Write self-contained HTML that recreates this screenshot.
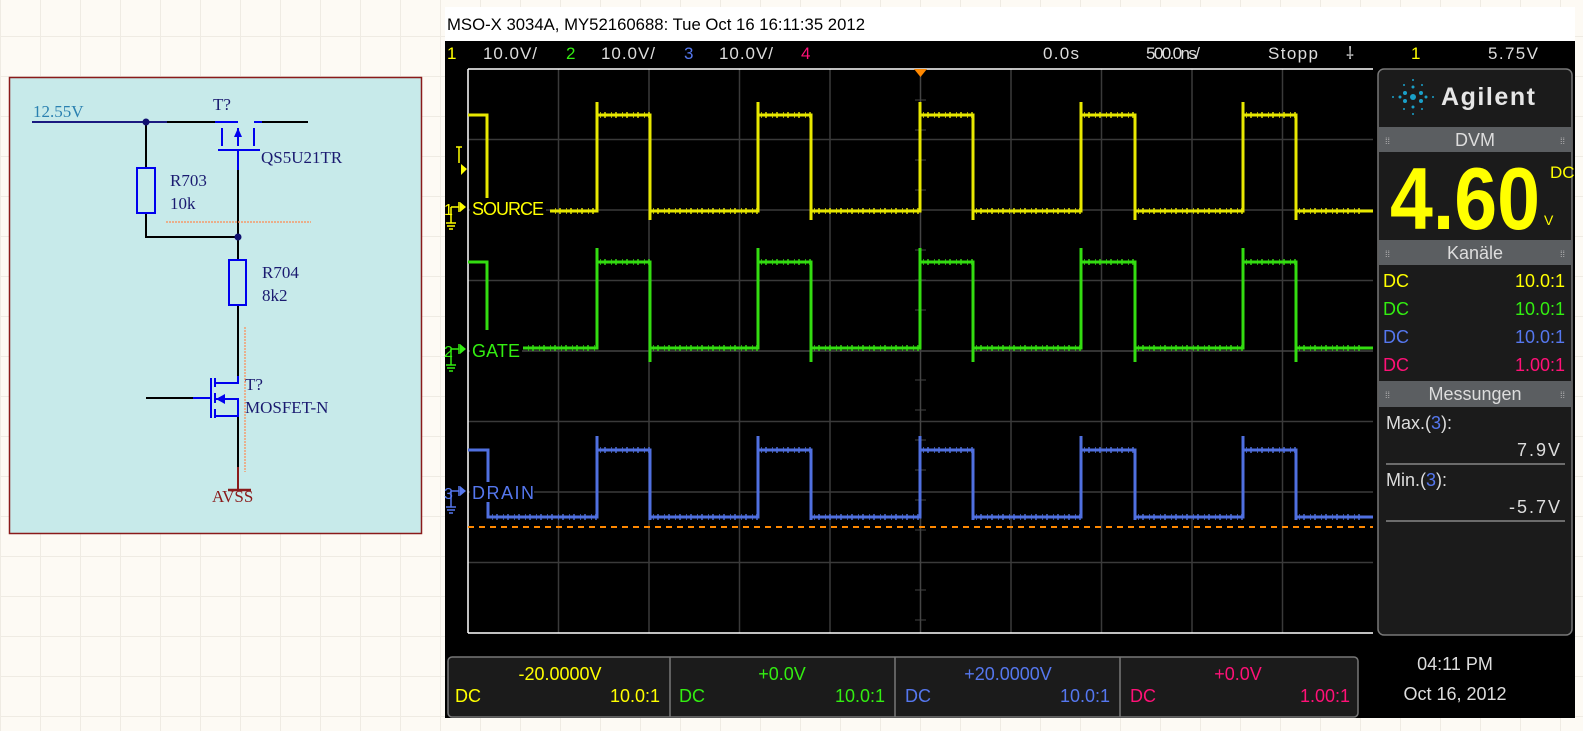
<!DOCTYPE html>
<html><head><meta charset="utf-8"><style>
html,body{margin:0;padding:0;width:1583px;height:731px;overflow:hidden;
background-color:#fdfaf4;
background-image:linear-gradient(#efebe3 1px,transparent 1px),linear-gradient(90deg,#efebe3 1px,transparent 1px);
background-size:40px 40px;background-position:0 -4px;}
svg{position:absolute;left:0;top:0}
.m{font-family:"Liberation Sans Narrow","Liberation Sans",sans-serif}
.s{font-family:"Liberation Serif",serif}
</style></head><body>
<svg width="1583" height="731" viewBox="0 0 1583 731">
<!-- schematic -->
<rect x="9.5" y="77.5" width="412" height="456" fill="#c7eaea" stroke="#8a1a1a" stroke-width="1.5"/>
<g class="s" font-size="17">
<text x="33" y="117" fill="#2a80b0">12.55V</text>
<text x="213" y="110" fill="#1a1a70">T?</text>
<text x="261" y="163" fill="#1a1a70">QS5U21TR</text>
<text x="170" y="186" fill="#1a1a70">R703</text>
<text x="170" y="209" fill="#1a1a70">10k</text>
<text x="262" y="278" fill="#1a1a70">R704</text>
<text x="262" y="301" fill="#1a1a70">8k2</text>
<text x="245" y="390" fill="#1a1a70">T?</text>
<text x="245" y="413" fill="#1a1a70">MOSFET-N</text>
<text x="212" y="502" fill="#8a1a1a">AVSS</text>
</g>
<g fill="none" stroke-width="2">
<path d="M32 122H167" stroke="#1a1a80"/>
<path d="M167 122H215M262 122H308M146 122V168M146 213V237H238M238 170V260M238 305V376M238 416V467" stroke="#000"/>
<path d="M215 122H238M254 122H262M222 128V146M238 128V146M254 128V146M218 150H260M238 150V170" stroke="#0000ee"/>
<rect x="137" y="168" width="18" height="45" stroke="#0000ee"/>
<rect x="229" y="260" width="17" height="45" stroke="#0000ee"/>
<path d="M238 376V383H214M211 378V418M215 378V387M215 393V403M215 409V418M216 399H238V416H214M146 398H193" stroke="#0000ee"/>
<path d="M146 398H193" stroke="#000"/>
<path d="M193 398H211" stroke="#0000ee"/>
<path d="M238 467V490" stroke="#8a1a1a"/>
<path d="M228 490H251" stroke="#8a1a1a" stroke-width="2.5"/>
<path d="M166 222H311" stroke="#ff8a50" stroke-width="1.2" stroke-dasharray="2 1"/>
<path d="M245 327V472" stroke="#ff8a50" stroke-width="1.2" stroke-dasharray="2 1"/>
</g>
<path d="M238 128L234 137H242Z" fill="#0000ee"/>
<path d="M216 399L225 394V404Z" fill="#0000ee"/>
<circle cx="146" cy="122" r="3.5" fill="#101070"/>
<circle cx="238" cy="237" r="3.5" fill="#101070"/>

<!-- scope -->
<rect x="445" y="7" width="1130" height="34" fill="#fff"/>
<text class="m" x="447" y="30" font-size="17" fill="#000" textLength="418" lengthAdjust="spacingAndGlyphs">MSO-X 3034A, MY52160688: Tue Oct 16 16:11:35 2012</text>
<rect x="445" y="41" width="1130" height="677" fill="#000"/>
<g class="m" font-size="17">
<text x="447" y="59" fill="#ffff00">1</text>
<text x="483" y="59" fill="#ddd" textLength="54">10.0V/</text>
<text x="566" y="59" fill="#33ee11">2</text>
<text x="601" y="59" fill="#ddd" textLength="54">10.0V/</text>
<text x="684" y="59" fill="#5577ee">3</text>
<text x="719" y="59" fill="#ddd" textLength="54">10.0V/</text>
<text x="801" y="59" fill="#ff1177">4</text>
<text x="1043" y="59" fill="#ddd" textLength="36">0.0s</text>
<text x="1146" y="59" fill="#ddd" textLength="54">500.0ns/</text>
<text x="1268" y="59" fill="#ddd" textLength="50">Stopp</text>
<text x="1346" y="59" fill="#ddd">⸸</text>
<text x="1411" y="59" fill="#ffff00">1</text>
<text x="1488" y="59" fill="#ddd" textLength="50">5.75V</text>
</g>
<!-- grid -->
<g stroke="#3a3a3a" stroke-width="1.5">
<path d="M558.5 69V633M649 69V633M739.5 69V633M830 69V633M1011 69V633M1101.5 69V633M1192 69V633M1282.5 69V633"/>
<path d="M468 139.5H1373M468 210H1373M468 280.5H1373M468 421.5H1373M468 492H1373M468 562.5H1373"/>
<path d="M920.5 69V633M468 351H1373" stroke="#444"/>
</g>
<path d="M915 100H926M915 130H926M915 160H926M915 190H926M915 250H926M915 280H926M915 310H926M915 380H926M915 410H926M915 440H926M915 470H926M915 500H926M915 530H926M915 590H926M915 620H926" stroke="#444" stroke-width="1"/>
<path d="M468 69H1373M468 633H1373M468 69V633" stroke="#fff" stroke-width="1.5" fill="none"/>
<path d="M914 69H927L920.5 77Z" fill="#ff8800"/>
<!-- traces -->
<g fill="none" stroke-width="3" stroke-linejoin="miter">
<path stroke="#e8e800" d="M468 115H487V200M550 211H597V102V115H650V220V211H758V102V115H811V220V211H920V102V115H973V220V211H1081V102V115H1135V220V211H1243V102V115H1296V220V211H1373"/>
<path stroke="#e8e800" stroke-width="6" stroke-dasharray="1 3 2 5" opacity=".7" d="M600 115H650M761 115H811M923 115H973M1084 115H1135M1246 115H1296M555 211H597M653 211H758M814 211H920M976 211H1081M1138 211H1243M1299 211H1360"/>
<path stroke="#33dd11" d="M468 262H487V330M523 348H597V248V262H650V362V348H758V248V262H811V362V348H920V248V262H973V362V348H1081V248V262H1135V362V348H1243V248V262H1296V362V348H1373"/>
<path stroke="#33dd11" stroke-width="6" stroke-dasharray="1 3 2 5" opacity=".7" d="M600 262H650M761 262H811M923 262H973M1084 262H1135M1246 262H1296M528 348H597M653 348H758M814 348H920M976 348H1081M1138 348H1243M1299 348H1360"/>
<path stroke="#5070e0" d="M468 450H488V517H597V436V450H650V520V517H758V436V450H811V520V517H920V436V450H973V520V517H1081V436V450H1135V520V517H1243V436V450H1296V520V517H1373"/>
<path stroke="#5070e0" stroke-width="6" stroke-dasharray="1 3 2 5" opacity=".7" d="M600 450H650M761 450H811M923 450H973M1084 450H1135M1246 450H1296M492 517H597M653 517H758M814 517H920M976 517H1081M1138 517H1243M1299 517H1360"/>
</g>
<path d="M468 527H1373" stroke="#ff8800" stroke-width="2" stroke-dasharray="6 5"/>
<!-- labels -->
<g class="m" font-size="18">
<rect x="470" y="198" width="76" height="20" fill="#000"/>
<text x="472" y="215" fill="#ffff00" textLength="72">SOURCE</text>
<rect x="470" y="340" width="52" height="20" fill="#000"/>
<text x="472" y="357" fill="#33ee11" textLength="48">GATE</text>
<rect x="470" y="482" width="64" height="20" fill="#000"/>
<text x="472" y="499" fill="#5577ee" textLength="62">DRAIN</text>
<text x="444" y="215" fill="#ffff00" font-size="16">1</text>
<text x="444" y="357" fill="#33ee11" font-size="16">2</text>
<text x="444" y="499" fill="#5577ee" font-size="16">3</text>
</g>
<g stroke-width="1.5" fill="none">
<path d="M451 207V223M446 223H456M447 226H455M449 229H453M451 207H459M459 202V212" stroke="#ffff00"/>
<path d="M451 349V365M446 365H456M447 368H455M449 371H453M451 349H459M459 344V354" stroke="#33ee11"/>
<path d="M451 491V507M446 507H456M447 510H455M449 513H453M451 491H459M459 486V496" stroke="#5577ee"/>
<path d="M456 147H462M459 147V163" stroke="#ffff00"/>
</g>
<path d="M461 164L467 169L461 175Z" fill="#ffff00"/>
<path d="M460 202L466 207L460 212Z" fill="#ffff00"/>
<path d="M460 344L466 349L460 354Z" fill="#33ee11"/>
<path d="M460 486L466 491L460 496Z" fill="#5577ee"/>

<!-- right panel -->
<rect x="1378" y="69" width="194" height="566" rx="6" fill="#1b1b1b" stroke="#777" stroke-width="1.5"/>
<g fill="#1aa0c8">
<circle cx="1413" cy="97" r="3"/><circle cx="1405" cy="93" r="2"/><circle cx="1421" cy="93" r="2"/><circle cx="1405" cy="101" r="2"/><circle cx="1421" cy="101" r="2"/>
<circle cx="1413" cy="87" r="1.5"/><circle cx="1413" cy="107" r="1.5"/><circle cx="1400" cy="97" r="1.5"/><circle cx="1426" cy="97" r="1.5"/>
<circle cx="1404" cy="85" r="1"/><circle cx="1422" cy="85" r="1"/><circle cx="1404" cy="109" r="1"/><circle cx="1422" cy="109" r="1"/><circle cx="1393" cy="97" r="1"/><circle cx="1433" cy="97" r="1"/><circle cx="1413" cy="80" r="1"/><circle cx="1413" cy="114" r="1"/>
</g>
<text x="1441" y="105" font-family="Liberation Sans,sans-serif" font-weight="bold" font-size="25" fill="#e6e6e6" textLength="94">Agilent</text>
<g fill="#5b5e61">
<rect x="1379" y="127" width="192" height="25"/>
<rect x="1379" y="240" width="192" height="25"/>
<rect x="1379" y="381" width="192" height="26"/>
</g>
<g class="m" font-size="18" fill="#ddd" text-anchor="middle">
<text x="1475" y="146">DVM</text>
<text x="1475" y="259">Kanäle</text>
<text x="1475" y="400">Messungen</text>
</g>
<g fill="#bbb" font-size="9" class="m">
<text x="1385" y="144">⁞⁞</text><text x="1560" y="144">⁞⁞</text>
<text x="1385" y="257">⁞⁞</text><text x="1560" y="257">⁞⁞</text>
<text x="1385" y="398">⁞⁞</text><text x="1560" y="398">⁞⁞</text>
</g>
<text x="1390" y="229" font-family="Liberation Sans,sans-serif" font-weight="bold" font-size="88" fill="#ffff00" textLength="150" lengthAdjust="spacingAndGlyphs">4.60</text>
<text class="m" x="1550" y="178" font-size="17" fill="#ffff00">DC</text>
<text class="m" x="1544" y="225" font-size="14" fill="#ffff00">V</text>
<g class="m" font-size="18">
<text x="1383" y="287" fill="#ffff00">DC</text><text x="1565" y="287" fill="#ffff00" text-anchor="end">10.0:1</text>
<text x="1383" y="315" fill="#33ee11">DC</text><text x="1565" y="315" fill="#33ee11" text-anchor="end">10.0:1</text>
<text x="1383" y="343" fill="#5577ee">DC</text><text x="1565" y="343" fill="#5577ee" text-anchor="end">10.0:1</text>
<text x="1383" y="371" fill="#ff1177">DC</text><text x="1565" y="371" fill="#ff1177" text-anchor="end">1.00:1</text>
<text x="1386" y="429" fill="#ddd">Max.(<tspan fill="#5577ee">3</tspan>):</text>
<text x="1562" y="456" fill="#ddd" text-anchor="end" letter-spacing="2">7.9V</text>
<text x="1386" y="486" fill="#ddd">Min.(<tspan fill="#5577ee">3</tspan>):</text>
<text x="1562" y="513" fill="#ddd" text-anchor="end" letter-spacing="2">-5.7V</text>
</g>
<path d="M1386 464H1565M1386 521H1565" stroke="#888" stroke-width="1.5"/>

<!-- bottom bar -->
<rect x="448" y="657" width="910" height="60" rx="4" fill="#1b1b1b" stroke="#777" stroke-width="1.5"/>
<path d="M670 657V717M895 657V717M1120 657V717" stroke="#777" stroke-width="1.5"/>
<g class="m" font-size="18">
<text x="560" y="680" fill="#ffff00" text-anchor="middle">-20.0000V</text>
<text x="455" y="702" fill="#ffff00">DC</text><text x="660" y="702" fill="#ffff00" text-anchor="end">10.0:1</text>
<text x="782" y="680" fill="#33ee11" text-anchor="middle">+0.0V</text>
<text x="679" y="702" fill="#33ee11">DC</text><text x="885" y="702" fill="#33ee11" text-anchor="end">10.0:1</text>
<text x="1008" y="680" fill="#5577ee" text-anchor="middle">+20.0000V</text>
<text x="905" y="702" fill="#5577ee">DC</text><text x="1110" y="702" fill="#5577ee" text-anchor="end">10.0:1</text>
<text x="1238" y="680" fill="#ff1177" text-anchor="middle">+0.0V</text>
<text x="1130" y="702" fill="#ff1177">DC</text><text x="1350" y="702" fill="#ff1177" text-anchor="end">1.00:1</text>
<text x="1455" y="670" fill="#ddd" text-anchor="middle">04:11 PM</text>
<text x="1455" y="700" fill="#ddd" text-anchor="middle">Oct 16, 2012</text>
</g>
</svg>
</body></html>
